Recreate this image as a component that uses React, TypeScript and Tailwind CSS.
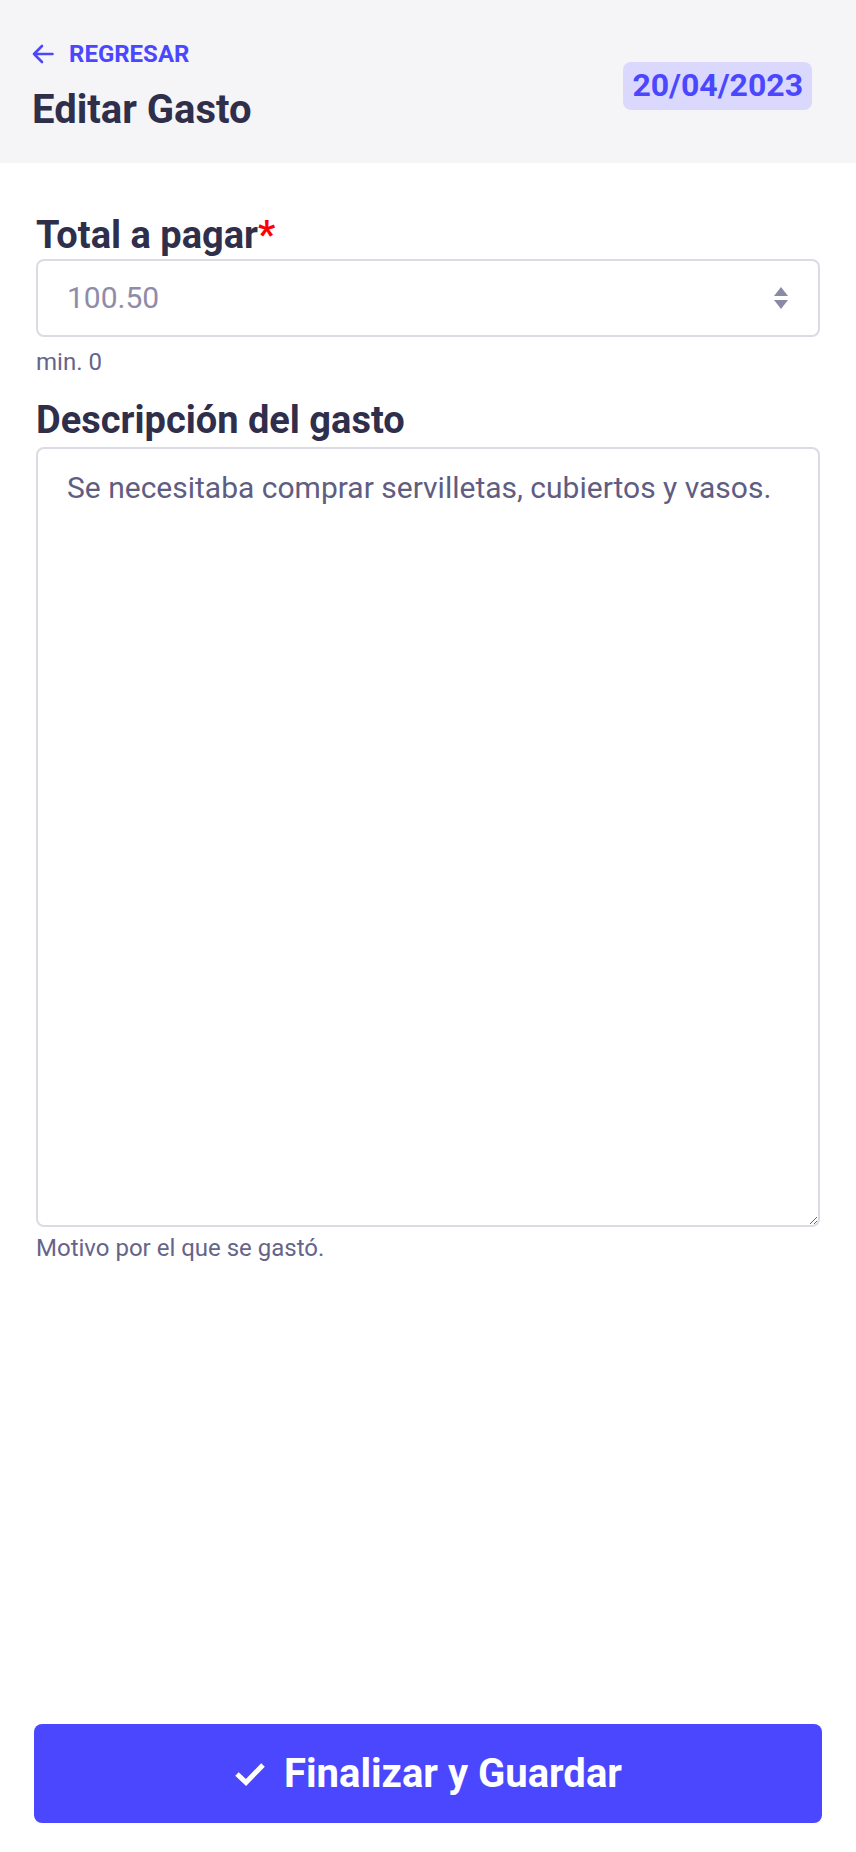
import React from "react";

export default function App() {
  return (
    <div className="flex h-screen flex-col bg-white font-['Roboto',sans-serif]">
      <header className="flex justify-between bg-[#f5f5f7] pl-8 pr-[44px] pt-[38px] pb-8">
        <div>
          <div className="flex h-8 items-center gap-[15px] text-[24px] font-bold leading-8 text-[#4b47ff]">
            <svg width="22" height="20" viewBox="0 0 22 20" fill="none">
              <path
                d="M20.5 10H2M10 2L2 10L10 18"
                stroke="#4b47ff"
                strokeWidth="2.6"
                strokeLinecap="round"
                strokeLinejoin="round"
              />
            </svg>
            <span>REGRESAR</span>
          </div>
          <h1 className="mt-[20px] h-[41px] text-[40px] font-bold leading-10 text-[#2f2e4b]">Editar Gasto</h1>
        </div>
        <div className="mt-6 h-12 self-start rounded-lg bg-[#dad9fd] px-[9px] text-[32px] font-bold leading-[47px] text-[#4b47ff]">
          20/04/2023
        </div>
      </header>

      <main className="flex flex-1 flex-col px-9 pt-[52px]">
        <label className="text-[38px] font-bold leading-10 text-[#2f2e4b]">
          Total a pagar<span className="text-[#ff0000]">*</span>
        </label>
        <div className="mt-1 flex h-[78px] items-center justify-between rounded-lg border-2 border-[#dcdbe4] pl-[29px] pr-[30px]">
          <span className="text-[30px] leading-10 text-[#8e8ca8]">100.50</span>
          <svg width="14" height="22" viewBox="0 0 14 22">
            <path d="M7 0L14 9H0Z" fill="#8b8aa6" />
            <path d="M7 22L14 13H0Z" fill="#8b8aa6" />
          </svg>
        </div>
        <p className="mt-[9px] text-[24px] leading-8 text-[#66648a]">min. 0</p>

        <label className="mt-[22px] text-[38px] font-bold leading-10 text-[#2f2e4b]">Descripción del gasto</label>
        <textarea
          readOnly
          defaultValue="Se necesitaba comprar servilletas, cubiertos y vasos."
          className="mt-[7px] h-[780px] w-full resize-y rounded-lg border-2 border-[#dcdbe4] pl-[29px] pr-7 pt-[19px] text-[30px] leading-10 text-[#5f5d82] outline-none"
        />
        <p className="mt-[5px] text-[24px] leading-8 text-[#66648a]">Motivo por el que se gastó.</p>
      </main>

      <div className="px-[34px] pb-[29px]">
        <button className="flex h-[99px] w-full items-center justify-center gap-[18px] rounded-lg bg-[#4b47ff] text-[40px] font-bold text-white">
          <svg width="32" height="26" viewBox="0 0 32 26" fill="none">
            <path d="M3 13L12 21.5L29 4" stroke="white" strokeWidth="5" />
          </svg>
          <span>Finalizar y Guardar</span>
        </button>
      </div>
    </div>
  );
}
